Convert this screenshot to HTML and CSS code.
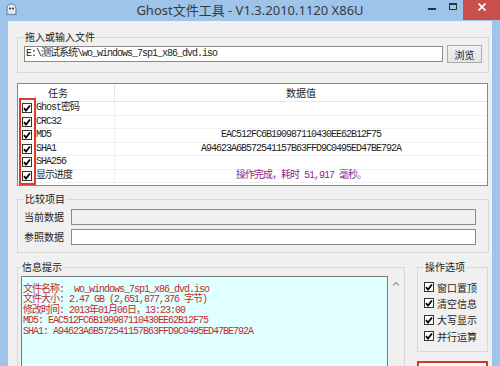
FILE: index.html
```html
<!DOCTYPE html>
<html lang="zh-CN">
<head>
    <meta charset="UTF-8">
    <title>Ghost文件工具</title>
    <link rel="stylesheet" href="styles.css">
</head>
<body>
<div class="window">
    <div class="titlebar">
        <svg class="app-icon" width="13" height="13" viewBox="0 0 13 13">
            <path d="M6.5 1C3.8 1 2 3 2 5.6V12l1.6-1.2 1.5 1.2 1.4-1.2 1.4 1.2 1.5-1.2L11 12V5.6C11 3 9.2 1 6.5 1z" fill="#e4ecf4" stroke="#5d7890"/>
            <circle cx="5" cy="5.5" r="1.1" fill="#2b3d52"/>
            <circle cx="8" cy="5.5" r="1.1" fill="#2b3d52"/>
        </svg>
        <div class="title">Ghost文件工具 - V1.3.2010.1120 X86U</div>
        <div class="controls">
            <span class="btn-min"></span>
            <span class="btn-max"></span>
            <span class="btn-close">
                <svg width="8" height="8" viewBox="0 0 8 8"><path d="M0.5 0.5l7 7M7.5 0.5l-7 7" stroke="#fff" stroke-width="1.6"/></svg>
            </span>
        </div>
    </div>

    <div class="client">
        <fieldset class="group file-group">
            <legend>拖入或输入文件</legend>
            <div class="file-row">
                <div class="textbox path">E:\测试系统\wo_windows_7sp1_x86_dvd.iso</div>
                <button class="btn">浏览</button>
            </div>
        </fieldset>

        <div class="list">
            <div class="list-head">
                <div class="head-task">任务</div>
                <div class="head-value">数据值</div>
            </div>
            <div class="list-row">
                <div class="cell-task"><svg class="check" width="10" height="10" viewBox="0 0 10 10"><rect x="0.5" y="0.5" width="9" height="9" fill="#fff" stroke="#333"/><path d="M2 5.2l2 2.3 4-5" fill="none" stroke="#000" stroke-width="1.8"/></svg>Ghost密码</div>
                <div class="cell-value"></div>
            </div>
            <div class="list-row">
                <div class="cell-task"><svg class="check" width="10" height="10" viewBox="0 0 10 10"><rect x="0.5" y="0.5" width="9" height="9" fill="#fff" stroke="#333"/><path d="M2 5.2l2 2.3 4-5" fill="none" stroke="#000" stroke-width="1.8"/></svg>CRC32</div>
                <div class="cell-value"></div>
            </div>
            <div class="list-row">
                <div class="cell-task"><svg class="check" width="10" height="10" viewBox="0 0 10 10"><rect x="0.5" y="0.5" width="9" height="9" fill="#fff" stroke="#333"/><path d="M2 5.2l2 2.3 4-5" fill="none" stroke="#000" stroke-width="1.8"/></svg>MD5</div>
                <div class="cell-value">EAC512FC6B190987110430EE62B12F75</div>
            </div>
            <div class="list-row">
                <div class="cell-task"><svg class="check" width="10" height="10" viewBox="0 0 10 10"><rect x="0.5" y="0.5" width="9" height="9" fill="#fff" stroke="#333"/><path d="M2 5.2l2 2.3 4-5" fill="none" stroke="#000" stroke-width="1.8"/></svg>SHA1</div>
                <div class="cell-value">A94623A6B572541157B63FFD9C0495ED47BE792A</div>
            </div>
            <div class="list-row">
                <div class="cell-task"><svg class="check" width="10" height="10" viewBox="0 0 10 10"><rect x="0.5" y="0.5" width="9" height="9" fill="#fff" stroke="#333"/><path d="M2 5.2l2 2.3 4-5" fill="none" stroke="#000" stroke-width="1.8"/></svg>SHA256</div>
                <div class="cell-value"></div>
            </div>
            <div class="list-row">
                <div class="cell-task"><svg class="check" width="10" height="10" viewBox="0 0 10 10"><rect x="0.5" y="0.5" width="9" height="9" fill="#fff" stroke="#333"/><path d="M2 5.2l2 2.3 4-5" fill="none" stroke="#000" stroke-width="1.8"/></svg>显示进度</div>
                <div class="cell-value progress">操作完成，耗时 51,917 毫秒。</div>
            </div>
            <div class="mark-box"></div>
        </div>

        <fieldset class="group compare-group">
            <legend>比较项目</legend>
            <div class="compare-grid">
                <label>当前数据</label>
                <div class="textbox disabled"></div>
                <label>参照数据</label>
                <div class="textbox"></div>
            </div>
        </fieldset>

        <div class="bottom">
            <fieldset class="group info-group">
                <legend>信息提示</legend>
                <div class="info-body">
                    <div class="log">文件名称:  wo_windows_7sp1_x86_dvd.iso
文件大小: 2.47 GB (2,651,877,376 字节)
修改时间: 2013年01月06日，13:23:00
MD5: EAC512FC6B190987110430EE62B12F75
SHA1: A94623A6B572541157B63FFD9C0495ED47BE792A</div>
                    <div class="scroll">
                        <svg width="8" height="5" viewBox="0 0 8 5"><path d="M1 4.5l3-3 3 3" fill="none" stroke="#9a9a9a" stroke-width="1.2"/></svg>
                    </div>
                </div>
            </fieldset>

            <div class="side">
                <fieldset class="group option-group">
                    <legend>操作选项</legend>
                    <div class="option"><svg class="check" width="10" height="10" viewBox="0 0 10 10"><rect x="0.5" y="0.5" width="9" height="9" fill="#fff" stroke="#333"/><path d="M2 5.2l2 2.3 4-5" fill="none" stroke="#000" stroke-width="1.8"/></svg>窗口置顶</div>
                    <div class="option"><svg class="check" width="10" height="10" viewBox="0 0 10 10"><rect x="0.5" y="0.5" width="9" height="9" fill="#fff" stroke="#333"/><path d="M2 5.2l2 2.3 4-5" fill="none" stroke="#000" stroke-width="1.8"/></svg>清空信息</div>
                    <div class="option"><svg class="check" width="10" height="10" viewBox="0 0 10 10"><rect x="0.5" y="0.5" width="9" height="9" fill="#fff" stroke="#333"/><path d="M2 5.2l2 2.3 4-5" fill="none" stroke="#000" stroke-width="1.8"/></svg>大写显示</div>
                    <div class="option"><svg class="check" width="10" height="10" viewBox="0 0 10 10"><rect x="0.5" y="0.5" width="9" height="9" fill="#fff" stroke="#333"/><path d="M2 5.2l2 2.3 4-5" fill="none" stroke="#000" stroke-width="1.8"/></svg>并行运算</div>
                </fieldset>
                <button class="run-btn"></button>
            </div>
        </div>
    </div>
</div>
</body>
</html>
```

FILE: styles.css
```css
* {
    box-sizing: border-box;
}
body {
    margin: 0;
    width: 500px;
    height: 366px;
    overflow: hidden;
    font-family: "Noto Sans CJK SC", sans-serif;
    color: #1e1e1e;
}
.window {
    height: 366px;
    background-color: #9ec4ea;
    display: flex;
    flex-direction: column;
    overflow: hidden;
}

/* title bar */
.titlebar {
    height: 21px;
    flex: none;
    display: grid;
    grid-template-columns: 1fr auto 1fr;
    align-items: start;
}
.app-icon {
    margin: 3px 0 0 5px;
}
.title {
    font-family: "Noto Sans", "Noto Sans CJK SC", sans-serif;
    font-size: 13px;
    line-height: 20px;
    color: #3a3a3a;
    white-space: nowrap;
}
.controls {
    justify-self: end;
    display: flex;
    align-items: flex-start;
}
.btn-min {
    width: 8px;
    height: 2px;
    background-color: #333;
    margin: 8px 13px 0 0;
}
.btn-max {
    width: 8px;
    height: 7px;
    border: 1px solid #333;
    border-top-width: 2px;
    margin: 3px 6px 0 0;
}
.btn-close {
    width: 37px;
    height: 20px;
    background-color: #c7504a;
    display: flex;
    justify-content: center;
    padding-top: 3px;
}

/* client area */
.client {
    flex: 1;
    min-height: 0;
    margin: 0 8px;
    background-color: #f0f0f0;
    padding: 9px 3px 0 9px;
    display: flex;
    flex-direction: column;
}
.group {
    margin: 0;
    min-width: 0;
    border: 1px solid #d8d8d8;
}
.group legend {
    font-size: 10px;
    line-height: 14px;
    padding: 0 1px;
    color: #222;
}
.textbox {
    height: 16px;
    border: 1px solid #8a8a8a;
    background-color: #fff;
}
.textbox.disabled {
    background-color: #f0f0f0;
}

.file-group {
    padding: 1px 6px 9px 6px;
}
.file-row {
    display: flex;
    align-items: center;
    gap: 4px;
}
.path {
    flex: 1;
    font-family: "Liberation Mono", "Noto Sans CJK SC", monospace;
    font-size: 10px;
    letter-spacing: -1px;
    line-height: 14px;
    padding: 0 1px;
    white-space: nowrap;
}
.btn {
    width: 35px;
    height: 18px;
    padding: 0;
    border: 1px solid #acacac;
    background: linear-gradient(#f2f2f2, #e3e3e3);
    font-family: "Noto Sans CJK SC", sans-serif;
    font-size: 10px;
    color: #222;
}

/* task list */
.list {
    position: relative;
    flex: none;
    margin: 10px 1px 0 0;
    border: 1px solid #828790;
    background-color: #fff;
    padding-bottom: 2px;
}
.list-head,
.list-row {
    display: grid;
    grid-template-columns: 97px 1fr;
}
.list-head {
    height: 18px;
    font-size: 10px;
    line-height: 17px;
    border-bottom: 1px solid #e5e5e5;
}
.head-task {
    padding-left: 30px;
    border-right: 1px solid #e5e5e5;
}
.head-value {
    text-align: center;
}
.list-row {
    height: 13.5px;
    border-bottom: 1px solid #f2f2f2;
    font-family: "Liberation Mono", "Noto Sans CJK SC", monospace;
    font-size: 10px;
    letter-spacing: -1px;
    line-height: 12.5px;
    white-space: nowrap;
}
.cell-task {
    display: flex;
    align-items: center;
    gap: 4px;
    padding-left: 4px;
    border-right: 1px solid #f2f2f2;
}
.cell-value {
    text-align: center;
}
.progress {
    color: #8e1f8e;
}
.check {
    flex: none;
}
.mark-box {
    position: absolute;
    left: 1px;
    top: 14px;
    width: 17px;
    height: 87px;
    border: 2px solid #dc3a2e;
}

/* compare */
.compare-group {
    margin-top: 6px;
    padding: 3px 12px 7px 6px;
}
.compare-grid {
    display: grid;
    grid-template-columns: 47px 1fr;
    row-gap: 4px;
    align-items: center;
}
.compare-grid label {
    font-size: 10px;
    line-height: 16px;
}

/* bottom */
.bottom {
    flex: 1;
    min-height: 0;
    margin: 7px 1px 0 0;
    display: flex;
    gap: 12px;
    align-items: flex-start;
}
.info-group {
    width: 388px;
    height: 130px;
    padding: 2px 0 0 3px;
}
.info-body {
    display: flex;
    height: 110px;
}
.log {
    width: 367px;
    border: 1px solid #7a7a7a;
    background-color: #e0ffff;
    padding: 8px 0 0 1px;
    font-family: "Liberation Mono", "Noto Sans CJK SC", monospace;
    font-size: 10px;
    letter-spacing: -1px;
    line-height: 10.4px;
    color: #c62a2a;
    white-space: pre;
    overflow: hidden;
}
.scroll {
    flex: 1;
    display: flex;
    justify-content: center;
    padding-top: 5px;
}
.side {
    width: 71px;
    display: flex;
    flex-direction: column;
    gap: 9px;
}
.option-group {
    padding: 5px 0 7px 6px;
}
.option {
    height: 16.3px;
    display: flex;
    align-items: center;
    gap: 3px;
    font-size: 10px;
}
.run-btn {
    height: 24px;
    padding: 0;
    border: 2px solid #d8382c;
    background-color: #f8f8f8;
}
```
